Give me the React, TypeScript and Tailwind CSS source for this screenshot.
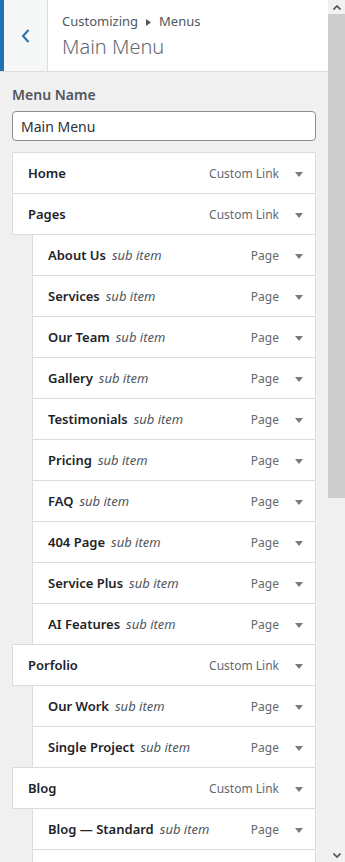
import React from "react";

type Item = { title: string; type: string; sub?: boolean; blank?: boolean };

const ITEMS: Item[] = [
  { title: "Home", type: "Custom Link" },
  { title: "Pages", type: "Custom Link" },
  { title: "About Us", type: "Page", sub: true },
  { title: "Services", type: "Page", sub: true },
  { title: "Our Team", type: "Page", sub: true },
  { title: "Gallery", type: "Page", sub: true },
  { title: "Testimonials", type: "Page", sub: true },
  { title: "Pricing", type: "Page", sub: true },
  { title: "FAQ", type: "Page", sub: true },
  { title: "404 Page", type: "Page", sub: true },
  { title: "Service Plus", type: "Page", sub: true },
  { title: "AI Features", type: "Page", sub: true },
  { title: "Porfolio", type: "Custom Link" },
  { title: "Our Work", type: "Page", sub: true },
  { title: "Single Project", type: "Page", sub: true },
  { title: "Blog", type: "Custom Link" },
  { title: "Blog — Standard", type: "Page", sub: true },
  // next row only peeks in at the bottom edge
  { title: "next", type: "Page", sub: true, blank: true },
];

const FONT = { fontFamily: '"Noto Sans", "Open Sans", sans-serif' };

function Caret() {
  return (
    <svg width="8" height="5" viewBox="0 0 8 5" className="shrink-0">
      <path d="M0 0 L8 0 L4 5 Z" fill="#787c82" />
    </svg>
  );
}

function MenuRow({ item, first }: { item: Item; first: boolean }) {
  return (
    <div
      className={`flex h-[42px] items-center border border-[#dcdcde] bg-white pl-[15px] pr-3 pt-[2px] ${
        item.sub ? "ml-5" : ""
      } ${first ? "" : "-mt-px"}`}
    >
      {!item.blank && (
        <>
          <span className="text-[13px] font-semibold text-[#1d2327] whitespace-nowrap">
            {item.title}
          </span>
          {item.sub && (
            <span className="ml-[6px] text-[13px] italic text-[#50575e] whitespace-nowrap">
              sub item
            </span>
          )}
          <span className="ml-auto mr-4 text-[12px] text-[#646970] whitespace-nowrap">
            {item.type}
          </span>
          <Caret />
        </>
      )}
    </div>
  );
}

function Scrollbar() {
  return (
    <div className="flex w-[17px] shrink-0 flex-col bg-[#f1f1f1]">
      <div className="flex h-[14px] items-center justify-center">
        <svg width="8" height="5" viewBox="0 0 8 5">
          <path d="M0.5 4.5 L4 1 L7.5 4.5" stroke="#505050" strokeWidth="1.6" fill="none" />
        </svg>
      </div>
      <div className="h-[484px] bg-[#cdcdcd]" />
      <div className="flex-1" />
      <div className="flex h-[14px] items-center justify-center">
        <svg width="8" height="5" viewBox="0 0 8 5">
          <path d="M0.5 0.5 L4 4 L7.5 0.5" stroke="#505050" strokeWidth="1.6" fill="none" />
        </svg>
      </div>
    </div>
  );
}

export default function App() {
  return (
    <div className="flex h-[862px] w-[345px] overflow-hidden bg-[#f0f0f1]" style={FONT}>
      <div className="flex w-[328px] shrink-0 flex-col">
        {/* header */}
        <div className="flex h-[72px] shrink-0 border-b border-[#dcdcde] bg-white">
          <div className="flex w-[48px] shrink-0 items-center justify-center border-l-4 border-r border-l-[#2271b1] border-r-[#dcdcde] bg-[#f6f7f7]">
            <svg width="10" height="14" viewBox="0 0 10 14">
              <path d="M7.5 1 L2 7 L7.5 13" stroke="#2271b1" strokeWidth="2" fill="none" />
            </svg>
          </div>
          <div className="flex flex-col pl-[14px] pt-[10px]">
            <div className="flex h-6 items-center text-[13px] text-[#50575e]">
              <span>Customizing</span>
              <svg width="5" height="7" viewBox="0 0 5 7" className="mx-[8px]">
                <path d="M0 0 L5 3.5 L0 7 Z" fill="#50575e" />
              </svg>
              <span>Menus</span>
            </div>
            <div className="h-[26px] text-[20px] font-light leading-[26px] text-[#646970]">
              Main Menu
            </div>
          </div>
        </div>

        {/* body */}
        <div className="flex flex-col px-3 pt-[13px]">
          <div className="h-5 text-[14px] font-semibold leading-5 text-[#50575e]">Menu Name</div>
          <div className="mt-[6px] flex h-[30px] items-center rounded border border-[#8c8f94] bg-white px-2 text-[14px] text-[#2c3338]">
            Main Menu
          </div>
          <div className="mt-[11px] flex flex-col">
            {ITEMS.map((item, i) => (
              <MenuRow key={item.title} item={item} first={i === 0} />
            ))}
          </div>
        </div>
      </div>
      <Scrollbar />
    </div>
  );
}
